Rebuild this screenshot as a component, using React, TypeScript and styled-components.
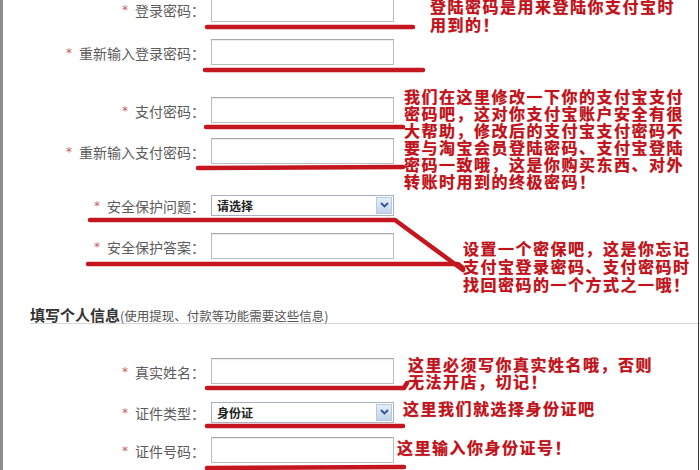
import React from "react";
import styled, { createGlobalStyle } from "styled-components";

const GlobalStyle = createGlobalStyle`
  html, body {
    margin: 0;
    padding: 0;
    background: #fff;
  }
  body {
    font-family: "Noto Sans CJK SC", "Liberation Sans", sans-serif;
  }
`;

const Page = styled.div`
  position: relative;
  box-sizing: border-box;
  width: 699px;
  height: 470px;
  overflow: hidden;
  background: #fff;
  border-left: 3px solid #8c8c8c;
  border-right: 1px solid #3a3a3a;
  font-family: "Noto Sans CJK SC", "Liberation Sans", sans-serif;
`;

const Form = styled.div`
  display: flex;
  flex-direction: column;
`;

const Row = styled.div<{ $gap: number }>`
  display: grid;
  grid-template-columns: 202px 183px;
  column-gap: 6px;
  align-items: center;
  height: 26px;
  margin-top: ${(p) => p.$gap}px;
`;

const Label = styled.label`
  display: flex;
  justify-content: flex-end;
  align-items: center;
  padding-top: 2px;
  font-size: 14px;
  color: #5c5c5c;
  white-space: nowrap;
`;

const Star = styled.span`
  color: #c46060;
  font-size: 12px;
  margin-right: 7px;
  font-family: "DejaVu Sans", sans-serif;
`;

const TextInput = styled.input`
  box-sizing: border-box;
  width: 183px;
  height: 26px;
  margin: 0;
  padding: 0 4px;
  border: 1px solid #bcbcbc;
  border-top-color: #a8a8a8;
  background: #fff;
  box-shadow: inset 0 1px 1px #ececec;
  outline: none;
`;

const Select = styled.div`
  box-sizing: border-box;
  width: 183px;
  height: 21px;
  display: flex;
  align-items: center;
  justify-content: space-between;
  padding: 0 1px 0 5px;
  border: 1px solid #a6b2c2;
  background: #fff;
  font-size: 12px;
  font-weight: 700;
  color: #222;
`;

const SelectArrow = styled.span`
  box-sizing: border-box;
  width: 16px;
  height: 17px;
  display: flex;
  align-items: center;
  justify-content: center;
  background: linear-gradient(#e6eef9, #c2d3ec);
  border: 1px solid #b7c8e1;
`;

const SectionHeader = styled.div`
  margin: 46px 0 0 27px;
  height: 18px;
  line-height: 18px;
  border-bottom: 1px solid #d8d8d8;
  white-space: nowrap;
`;

const SectionTitle = styled.span`
  font-size: 15px;
  font-weight: 700;
  color: #333;
`;

const SectionHint = styled.span`
  font-size: 12.5px;
  color: #555;
`;

const Overlay = styled.div`
  position: absolute;
  left: -3px;
  top: 0;
  width: 700px;
  height: 470px;
  pointer-events: none;
`;

const Marks = styled.svg`
  position: absolute;
  left: 0;
  top: 0;
`;

const Note = styled.div<{ $x: number; $y: number; $lh?: number }>`
  position: absolute;
  left: ${(p) => p.$x}px;
  top: ${(p) => p.$y}px;
  font-size: 16px;
  line-height: ${(p) => p.$lh ?? 17.5}px;
  letter-spacing: 1.5px;
  font-weight: 700;
  color: #c4121c;
  white-space: nowrap;
  text-shadow: 0 0 1px rgba(110, 0, 0, 0.55);
`;

const NoteLine = styled.span`
  display: block;
`;

const Chevron = () => (
  <svg width="9" height="6" viewBox="0 0 9 6">
    <path d="M1 1 L4.5 4.5 L8 1" fill="none" stroke="#2f5596" strokeWidth="1.8" />
  </svg>
);

type Field = { label: string; gap: number; select?: string };

const accountFields: Field[] = [
  { label: "登录密码：", gap: -4 },
  { label: "重新输入登录密码：", gap: 17 },
  { label: "支付密码：", gap: 32 },
  { label: "重新输入支付密码：", gap: 15 },
  { label: "安全保护问题：", gap: 28, select: "请选择" },
  { label: "安全保护答案：", gap: 15 },
];

const personalFields: Field[] = [
  { label: "真实姓名：", gap: 34 },
  { label: "证件类型：", gap: 15, select: "身份证" },
  { label: "证件号码：", gap: 12 },
];

const FieldRow: React.FC<{ field: Field }> = ({ field }) => (
  <Row $gap={field.gap}>
    <Label>
      <Star>*</Star>
      {field.label}
    </Label>
    {field.select ? (
      <Select>
        {field.select}
        <SelectArrow>
          <Chevron />
        </SelectArrow>
      </Select>
    ) : (
      <TextInput type="text" />
    )}
  </Row>
);

const notes = [
  { x: 430, y: -3, lh: 18, lines: ["登陆密码是用来登陆你支付宝时", "用到的！"] },
  {
    x: 404,
    y: 88,
    lh: 17,
    lines: [
      "我们在这里修改一下你的支付宝支付",
      "密码吧，这对你支付宝账户安全有很",
      "大帮助，修改后的支付宝支付密码不",
      "要与淘宝会员登陆密码、支付宝登陆",
      "密码一致哦，这是你购买东西、对外",
      "转账时用到的终极密码！",
    ],
  },
  {
    x: 463,
    y: 239,
    lh: 18,
    lines: ["设置一个密保吧，这是你忘记", "支付宝登录密码、支付密码时", "找回密码的一个方式之一哦！"],
  },
  { x: 408, y: 356, lh: 17, lines: ["这里必须写你真实姓名哦，否则", "无法开店，切记！"] },
  { x: 403, y: 399, lh: 18, lines: ["这里我们就选择身份证吧"] },
  { x: 397, y: 438, lh: 18, lines: ["这里输入你身份证号！"] },
];

const strokes = [
  "M207 27 L413 27",
  "M205 70 L423 70",
  "M206 127 L403 127",
  "M198 168 L403 167",
  "M90 220 L395 220 L463 270",
  "M88 264 L458 264 L463 268",
  "M207 388 L404 388 L407 383",
  "M207 426 L403 426",
  "M207 468 L404 467",
];

export default function App() {
  return (
    <>
      <GlobalStyle />
      <Page>
        <Form>
          {accountFields.map((f) => (
            <FieldRow key={f.label} field={f} />
          ))}
          <SectionHeader>
            <SectionTitle>填写个人信息</SectionTitle>
            <SectionHint>(使用提现、付款等功能需要这些信息)</SectionHint>
          </SectionHeader>
          {personalFields.map((f) => (
            <FieldRow key={f.label} field={f} />
          ))}
        </Form>
        <Overlay>
          <Marks width="700" height="470" viewBox="0 0 700 470">
            {strokes.map((d) => (
              <path
                key={d}
                d={d}
                fill="none"
                stroke="#c4161f"
                strokeWidth="4.5"
                strokeLinecap="round"
                strokeLinejoin="round"
              />
            ))}
          </Marks>
          {notes.map((n) => (
            <Note key={n.lines[0]} $x={n.x} $y={n.y} $lh={n.lh}>
              {n.lines.map((l) => (
                <NoteLine key={l}>{l}</NoteLine>
              ))}
            </Note>
          ))}
        </Overlay>
      </Page>
    </>
  );
}
